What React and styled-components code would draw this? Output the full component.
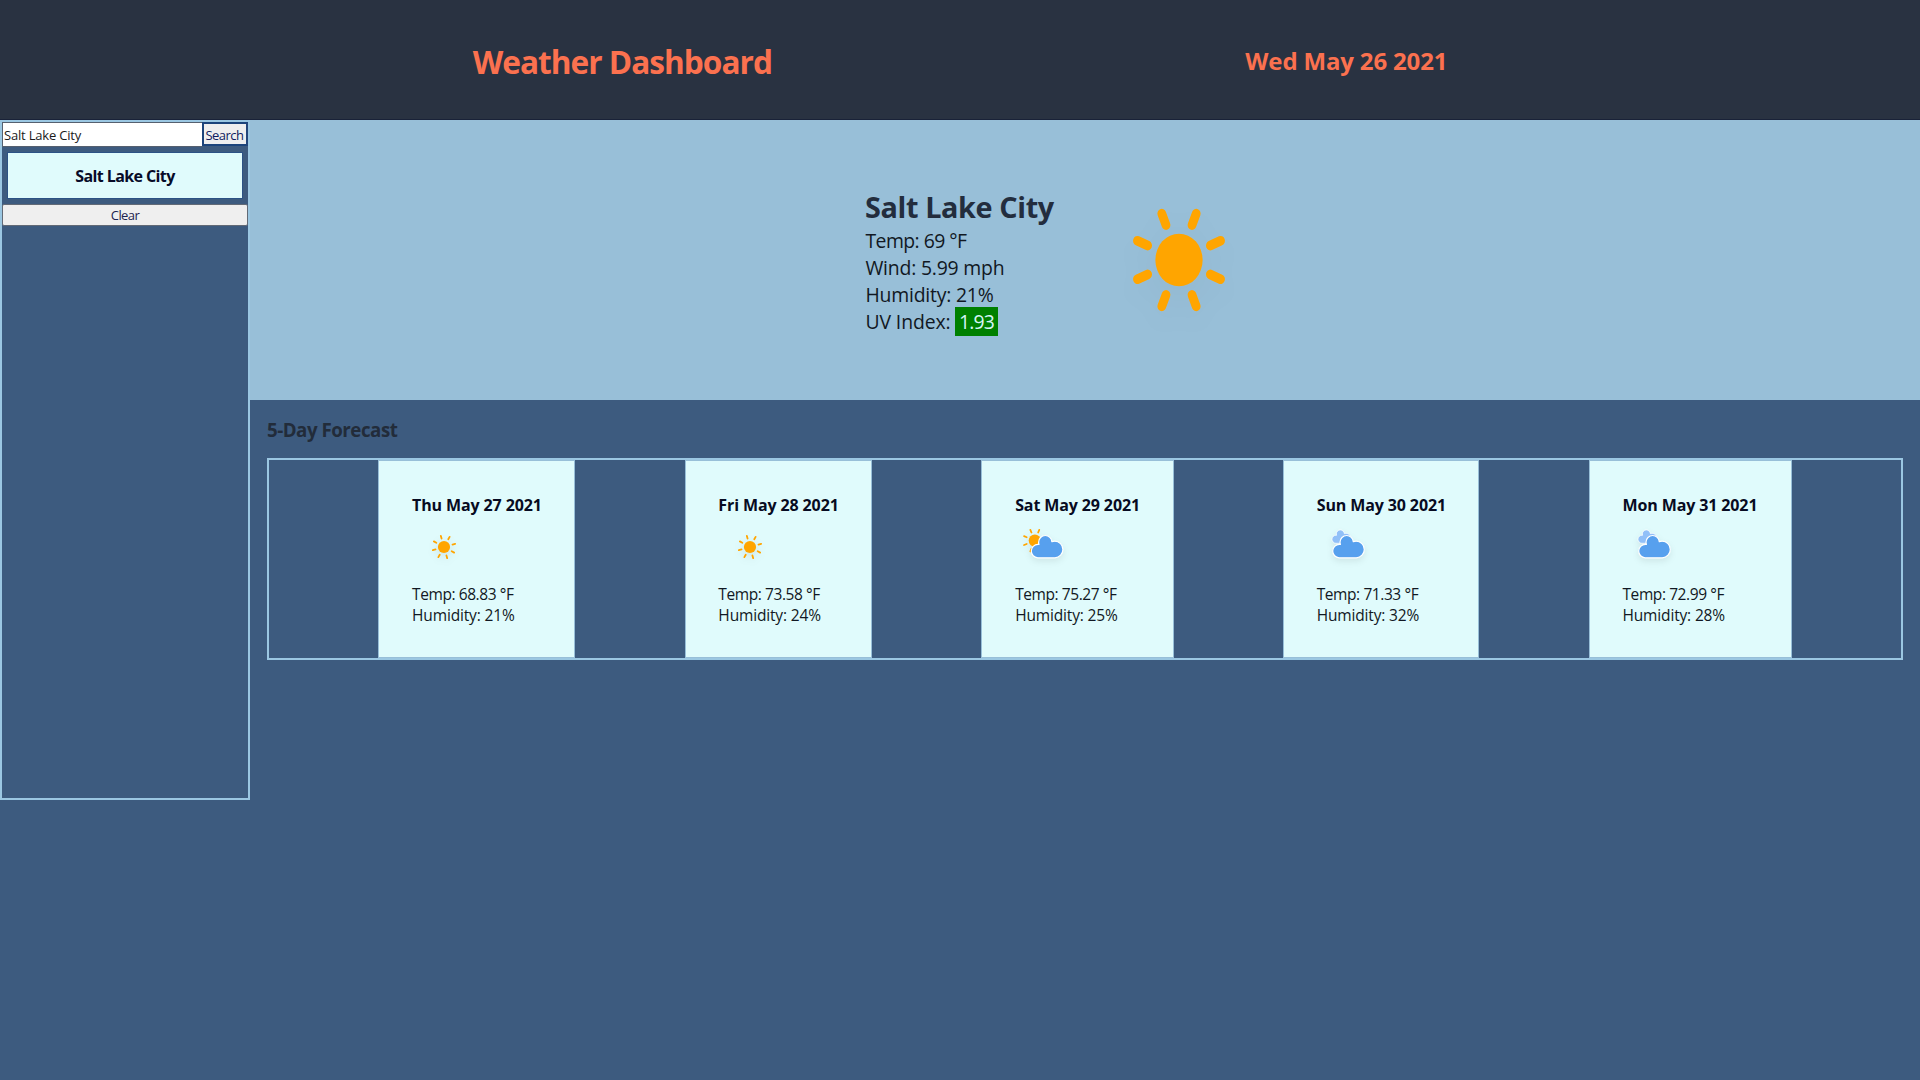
import React from 'react';
import styled, { createGlobalStyle } from 'styled-components';

const GlobalStyle = createGlobalStyle`
  * { box-sizing: border-box; margin: 0; padding: 0; }
  body {
    background: #3d5b7f;
    color: #111823;
    font-family: "Segoe UI", "Open Sans", "Noto Sans", sans-serif;
    overflow: hidden;
  }
`;

const Page = styled.div`
  display: flex;
  flex-direction: column;
  height: 1080px;
`;

const Header = styled.header`
  display: flex;
  justify-content: space-evenly;
  align-items: center;
  height: 120px;
  padding-bottom: 2px;
  background: #293241;
  border-bottom: 1px solid #192238;
  color: #fb714f;
`;

const Title = styled.h1`
  width: 300px;
  padding-top: 6px;
  font-size: 31.6px;
  line-height: 42px;
  font-weight: 700;
  letter-spacing: -0.98px;
  white-space: nowrap;
`;

const Today = styled.h2`
  width: 202px;
  padding-top: 5px;
  font-size: 24px;
  line-height: 32px;
  font-weight: 700;
  letter-spacing: -0.16px;
  white-space: nowrap;
`;

const Body = styled.div`
  display: flex;
  align-items: flex-start;
`;

const Sidebar = styled.aside`
  display: flex;
  flex-direction: column;
  width: 250px;
  height: 680px;
  border: 2px solid #9bc7e2;
`;

const SearchForm = styled.form`
  display: flex;
  height: 25px;
`;

const SearchInput = styled.input`
  width: 200px;
  height: 25px;
  padding: 1px 2px 0 1px;
  border: 1px solid #55606f;
  border-right: 0;
  background: #fff;
  color: #1a1a1a;
  font: 400 13px "Segoe UI", "Open Sans", "Noto Sans", sans-serif;
  letter-spacing: -0.19px;
  outline: none;
`;

const SearchButton = styled.button`
  flex: 1;
  height: 24px;
  padding: 2px 1px 0 0;
  border: 2px solid #1c447b;
  border-right-color: #24477a;
  background: #efefef;
  color: #101c60;
  font: 400 13px/18px "Segoe UI", "Open Sans", "Noto Sans", sans-serif;
  letter-spacing: -0.5px;
  text-align: center;
  white-space: nowrap;
`;

const CityButton = styled.button`
  height: 47px;
  margin: 5px;
  padding-top: 1px;
  border: 1px solid #2c5285;
  background: #e0fbfc;
  color: #070b28;
  font: 700 16px/44px "Segoe UI", "Open Sans", "Noto Sans", sans-serif;
  letter-spacing: -0.6px;
`;

const ClearButton = styled.button`
  height: 22px;
  border: 1px solid #626a76;
  border-radius: 2px;
  background: #efefef;
  color: #1b2350;
  font: 400 13px/20px "Segoe UI", "Open Sans", "Noto Sans", sans-serif;
  letter-spacing: -0.57px;
`;

const Main = styled.main`
  flex: 1;
  min-width: 0;
`;

const Current = styled.section`
  display: flex;
  justify-content: center;
  align-items: center;
  height: 280px;
  background: #98bfd8;
`;

const CurrentText = styled.div`
  width: 192px;
  padding: 2px 0 0 1px;
`;

const CityName = styled.h2`
  font-size: 28.8px;
  line-height: 40px;
  font-weight: 700;
  letter-spacing: -0.37px;
  color: #232d3d;
  white-space: nowrap;
`;

const Reading = styled.p`
  height: 27px;
  padding-left: 0.4px;
  font-size: 19.4px;
  line-height: 27px;
  letter-spacing: ${(p) => p.$track}px;
  white-space: nowrap;
`;

const UvBadge = styled.span`
  display: inline-block;
  width: 43px;
  height: 29px;
  margin: -5px 0 0 -0.5px;
  line-height: 29px;
  letter-spacing: -0.8px;
  text-align: center;
  vertical-align: middle;
  background: #008000;
  color: #d5f5f6;
`;

const BigIcon = styled.div`
  display: flex;
  justify-content: center;
  align-items: center;
  width: 250px;
  height: 280px;
  padding-right: 4px;
  svg { filter: drop-shadow(0 12px 12px rgba(0, 0, 0, 0.03)); }
`;

const Forecast = styled.section`
  padding: 16px 17px 0;
`;

const ForecastTitle = styled.h3`
  height: 42px;
  font-size: 18.72px;
  line-height: 28px;
  font-weight: 700;
  letter-spacing: -0.48px;
  color: #222c3a;
`;

const Days = styled.div`
  display: flex;
  justify-content: space-evenly;
  height: 202px;
  border: 2px solid #9bc7e2;
`;

const DayCard = styled.article`
  width: ${(p) => p.$width}px;
  padding: 33px 0 0 32.8px;
  background: #e0fbfc;
  border: 1px solid #98bfd8;
`;

const DayDate = styled.h4`
  height: 21px;
  font-size: 16px;
  line-height: 22px;
  font-weight: 700;
  letter-spacing: -0.12px;
  color: #070b22;
  white-space: nowrap;
`;

const DayIcon = styled.div`
  height: 69px;
  svg { display: block; filter: drop-shadow(0 3px 3px rgba(0, 0, 0, 0.08)); }
`;

const DayText = styled.p`
  font-size: 15.5px;
  line-height: 21.3px;
  letter-spacing: ${(p) => p.$track}px;
  white-space: nowrap;
`;

const CLOUD =
  'M47.7,35.4c0-4.6-3.7-8.2-8.2-8.2c-1,0-1.9,0.2-2.8,0.5c-0.3-3.4-3.1-6.2-6.6-6.2c-3.7,0-6.7,3-6.7,6.7c0,0.8,0.2,1.6,0.4,2.3c-0.3-0.1-0.7-0.1-1-0.1c-3.7,0-6.7,3-6.7,6.7c0,3.6,2.9,6.6,6.5,6.7l17.2,0C44.2,43.3,47.7,39.8,47.7,35.4z';

function SunShape({ turn, r = 6.1, inner = 8.8, outer = 11.6, stroke = 1.8 }) {
  return (
    <g>
      <g transform={`rotate(${turn})`} stroke="orange" strokeWidth={stroke} strokeLinecap="round">
        {[0, 45, 90, 135, 180, 225, 270, 315].map((a) => (
          <line key={a} y1={inner} y2={outer} transform={`rotate(${a})`} />
        ))}
      </g>
      <circle r={r} fill="orange" />
    </g>
  );
}

function CloudShape({ transform, fill }) {
  return (
    <path d={CLOUD} transform={transform} fill={fill} stroke="#fff" strokeWidth="1.2" strokeLinejoin="round" />
  );
}

function WeatherIcon({ kind }) {
  return (
    <svg width="64" height="64" viewBox="0 0 64 64">
      {kind === 'sun' && (
        <g transform="translate(32,32)"><SunShape turn={-16} /></g>
      )}
      {kind === 'partly' && (
        <g>
          <g transform="translate(19.8,25.6)"><SunShape turn={22.5} /></g>
          <CloudShape transform="translate(0.2,-1)" fill="#57a0ee" />
        </g>
      )}
      {kind === 'cloudy' && (
        <g>
          <CloudShape transform="translate(5.3,2) scale(0.6)" fill="#91c0f8" />
          <CloudShape transform="translate(-0.4,-1)" fill="#57a0ee" />
        </g>
      )}
    </svg>
  );
}

const days = [
  { date: 'Thu May 27 2021', width: 197, icon: 'sun', temp: '68.83', humidity: 21 },
  { date: 'Fri May 28 2021', width: 187.5, icon: 'sun', temp: '73.58', humidity: 24 },
  { date: 'Sat May 29 2021', width: 192.3, icon: 'partly', temp: '75.27', humidity: 25 },
  { date: 'Sun May 30 2021', width: 196.5, icon: 'cloudy', temp: '71.33', humidity: 32 },
  { date: 'Mon May 31 2021', width: 203, icon: 'cloudy', temp: '72.99', humidity: 28 },
];

export default function App() {
  return (
    <Page>
      <GlobalStyle />
      <Header>
        <Title>Weather Dashboard</Title>
        <Today>Wed May 26 2021</Today>
      </Header>
      <Body>
        <Sidebar>
          <SearchForm>
            <SearchInput defaultValue="Salt Lake City" />
            <SearchButton type="button">Search</SearchButton>
          </SearchForm>
          <CityButton>Salt Lake City</CityButton>
          <ClearButton>Clear</ClearButton>
        </Sidebar>
        <Main>
          <Current>
            <CurrentText>
              <CityName>Salt Lake City</CityName>
              <Reading $track={-0.54}>Temp: 69 °F</Reading>
              <Reading $track={-0.2}>Wind: 5.99 mph</Reading>
              <Reading $track={-0.2}>Humidity: 21%</Reading>
              <Reading $track={-0.1}>UV Index: <UvBadge>1.93</UvBadge></Reading>
            </CurrentText>
            <BigIcon>
              <svg width="244" height="272" viewBox="0 0 64 64" preserveAspectRatio="none">
                <g transform="translate(32,32)">
                  <SunShape turn={22.5} r={6.2} inner={8.9} outer={11.8} stroke={2.3} />
                </g>
              </svg>
            </BigIcon>
          </Current>
          <Forecast>
            <ForecastTitle>5-Day Forecast</ForecastTitle>
            <Days>
              {days.map((d) => (
                <DayCard key={d.date} $width={d.width}>
                  <DayDate>{d.date}</DayDate>
                  <DayIcon><WeatherIcon kind={d.icon} /></DayIcon>
                  <DayText $track={-0.42}>Temp: {d.temp} °F</DayText>
                  <DayText $track={-0.16}>Humidity: {d.humidity}%</DayText>
                </DayCard>
              ))}
            </Days>
          </Forecast>
        </Main>
      </Body>
    </Page>
  );
}
